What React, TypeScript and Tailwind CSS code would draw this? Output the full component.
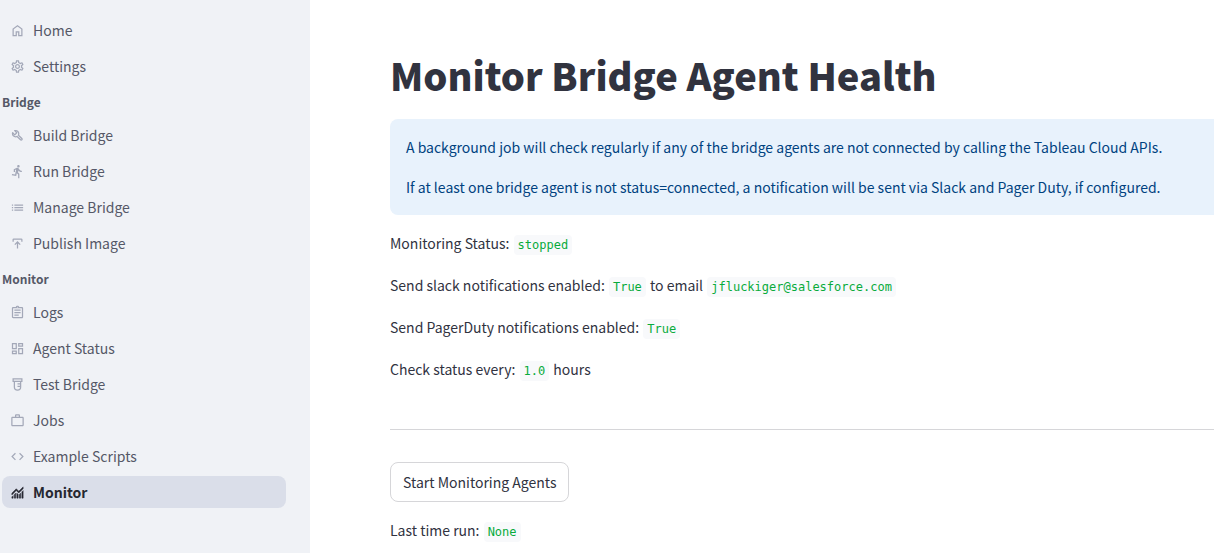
import type { ReactNode } from "react";
import type { IconType } from "react-icons";
import {
  MdOutlineSettings,
  MdDirectionsRun,
  MdList,
  MdOutlineAssignment,
  MdOutlineDashboard,
  MdWorkOutline,
  MdCode,
} from "react-icons/md";

type IconProps = { className?: string };

function HomeIcon({ className }: IconProps) {
  return (
    <svg viewBox="0 0 24 24" fill="currentColor" className={className}>
      <path d="M6 19h3v-6h6v6h3v-9l-6-4.5L6 10zm-2 2V9l8-6 8 6v12h-7v-6h-2v6z" />
    </svg>
  );
}

function BuildIcon({ className }: IconProps) {
  return (
    <svg viewBox="0 0 24 24" fill="currentColor" fillRule="evenodd" className={className}>
      <path d="M9 15q-2.5 0-4.25-1.75T3 9q0-.5.075-1t.275-.95q.125-.25.312-.375t.413-.175q.225-.05.463.013t.437.262L7.6 9.4 9.4 7.6 6.775 4.975q-.2-.2-.262-.437t-.013-.463q.05-.225.175-.413t.375-.312Q7.5 3.15 8 3.075T9 3q2.5 0 4.25 1.75T15 9q0 .575-.1 1.088t-.3 1.012l5.05 5q.725.725.725 1.775t-.725 1.775-1.775.725-1.775-.75l-5-5.025q-.5.2-1.012.3T9 15M5.05 9.65 6.9 11.5q.7.6 1.4 0l3.2-3.2q.6-.7 0-1.4L9.65 5.05C11.5 5.3 13 7 13 9c0 1-.3 1.9-.85 2.5l6.4 6.35-.7.7L11.5 12.4C10.8 12.8 10 13 9 13 7 13 5.3 11.5 5.05 9.65z" />
    </svg>
  );
}

function PublishIcon({ className }: IconProps) {
  return (
    <svg viewBox="0 0 24 24" fill="currentColor" className={className}>
      <path d="M11 20v-8.15L8.4 14.45 7 13l5-5 5 5-1.4 1.45-2.6-2.6V20h-2ZM4 9V6q0-.825.588-1.412T6 4h12q.825 0 1.413.588T20 6v3h-2V6H6v3H4Z" />
    </svg>
  );
}

function TubeIcon({ className }: IconProps) {
  return (
    <svg viewBox="0 0 24 24" fill="none" stroke="currentColor" strokeWidth="2" className={className}>
      <path d="M5 3h14v4H5z" />
      <path d="M7 7v9a5 5 0 0 0 10 0V7" />
      <path d="M12 11h5M12 15h5" />
    </svg>
  );
}

function MonitoringIcon({ className }: IconProps) {
  return (
    <svg viewBox="0 0 24 24" fill="currentColor" stroke="currentColor" strokeWidth="0.8" className={className}>
      <path d="M3 21v-2l2-2v4H3zm4 0v-6l2-2v8H7zm4 0v-8l2 2.025V21h-2zm4 0v-5.975l2-2V21h-2zm4 0V11l2-2v12h-2zM3 15.825V13l7-7 4 4 7-7v2.825l-7 7-4-4-7 7z" />
    </svg>
  );
}

type Item = { label: string; icon: IconType | typeof TubeIcon; active?: boolean };

const groups: { title?: string; items: Item[] }[] = [
  {
    items: [
      { label: "Home", icon: HomeIcon },
      { label: "Settings", icon: MdOutlineSettings },
    ],
  },
  {
    title: "Bridge",
    items: [
      { label: "Build Bridge", icon: BuildIcon },
      { label: "Run Bridge", icon: MdDirectionsRun },
      { label: "Manage Bridge", icon: MdList },
      { label: "Publish Image", icon: PublishIcon },
    ],
  },
  {
    title: "Monitor",
    items: [
      { label: "Logs", icon: MdOutlineAssignment },
      { label: "Agent Status", icon: MdOutlineDashboard },
      { label: "Test Bridge", icon: TubeIcon },
      { label: "Jobs", icon: MdWorkOutline },
      { label: "Example Scripts", icon: MdCode },
      { label: "Monitor", icon: MonitoringIcon, active: true },
    ],
  },
];

function NavItem({ label, icon: Icon, active }: Item) {
  return (
    <li>
      <a
        href="#"
        aria-current={active ? "page" : undefined}
        className={
          active
            ? "flex h-8 items-center gap-2 rounded-lg bg-[#dadee9] px-2 font-bold text-[#262730]"
            : "flex h-8 items-center gap-2 rounded-lg px-2 text-[#555867]"
        }
      >
        <Icon className={active ? "size-[15px] shrink-0" : "size-[15px] shrink-0 text-[#a3a8b8]"} />
        {label}
      </a>
    </li>
  );
}

function Code({ children }: { children: ReactNode }) {
  return (
    <code className="mx-px rounded bg-[#f8f9fb] px-1 py-[3px] font-['DejaVu_Sans_Mono',monospace] text-[12px] leading-4 text-[#09ab3b]">
      {children}
    </code>
  );
}

export default function App() {
  return (
    <div className="flex h-screen overflow-hidden bg-white font-['Noto_Sans_CJK_SC',sans-serif] text-[14px] leading-6 text-[#31333f]">
      <nav aria-label="Pages" className="w-[310px] shrink-0 bg-[#f0f2f6] pt-3.5 pr-6 pl-0.5">
        {groups.map((group, i) => (
          <section key={i}>
            {group.title && (
              <h2 className="pt-2.5 pb-[7px] text-[12px] leading-5 font-bold text-[#555867]">{group.title}</h2>
            )}
            <ul className="flex flex-col gap-1">
              {group.items.map((item) => (
                <NavItem key={item.label} {...item} />
              ))}
            </ul>
          </section>
        ))}
      </nav>

      <main className="min-w-0 flex-1 overflow-hidden pt-12 pl-20">
        <h1 className="pb-[18px] text-[38px] leading-[53px] font-black whitespace-nowrap">
          Monitor Bridge Agent Health
        </h1>
        <div role="status" className="flex flex-col gap-4 rounded-l-lg bg-[#e8f2fc] p-4 whitespace-nowrap text-[#004280]">
          <p>A background job will check regularly if any of the bridge agents are not connected by calling the Tableau Cloud APIs.</p>
          <p>If at least one bridge agent is not status=connected, a notification will be sent via Slack and Pager Duty, if configured.</p>
        </div>
        <div className="flex flex-col gap-[18px] pt-4">
          <p>Monitoring Status: <Code>stopped</Code></p>
          <p>
            Send slack notifications enabled: <Code>True</Code> to email <Code>jfluckiger@salesforce.com</Code>
          </p>
          <p>Send PagerDuty notifications enabled: <Code>True</Code></p>
          <p>Check status every: <Code>1.0</Code> hours</p>
        </div>
        <hr className="mt-12 mb-8 border-[#d6d6d9]" />
        <button type="button" className="h-10 rounded-lg border border-[#d6d6d9] px-3">
          Start Monitoring Agents
        </button>
        <p className="pt-4">Last time run: <Code>None</Code></p>
      </main>
    </div>
  );
}
